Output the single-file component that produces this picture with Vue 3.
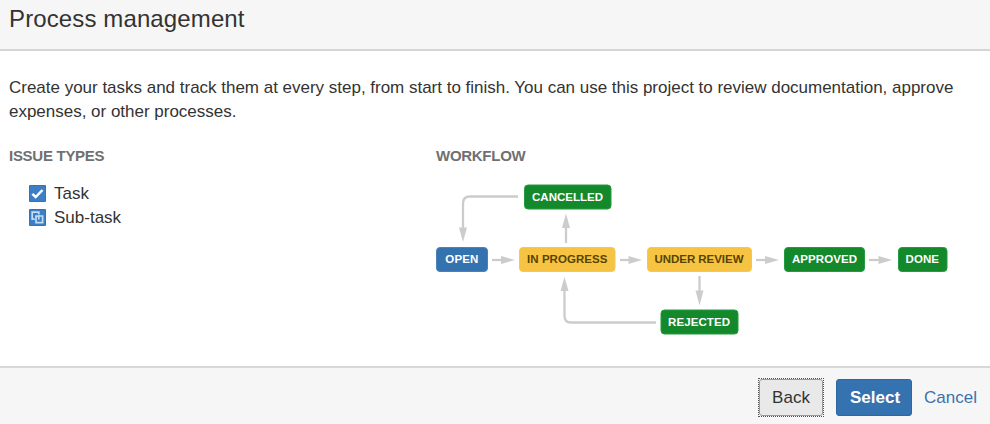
<script setup>
const issueTypes = [
  { name: 'Task', kind: 'task' },
  { name: 'Sub-task', kind: 'subtask' },
]

const nodes = [
  { label: 'CANCELLED', x: 88, y: 12.5, w: 87.5, tx: 96, tw: 71, tone: 'done' },
  { label: 'OPEN', x: 0, y: 75, w: 52, tx: 9.3, tw: 33, tone: 'open' },
  { label: 'IN PROGRESS', x: 83, y: 75, w: 96.5, tx: 91, tw: 80.5, tone: 'progress' },
  { label: 'UNDER REVIEW', x: 211, y: 75, w: 105, tx: 218.5, tw: 89, tone: 'progress' },
  { label: 'APPROVED', x: 348, y: 75, w: 81, tx: 356, tw: 65, tone: 'done' },
  { label: 'DONE', x: 462, y: 75, w: 49.5, tx: 469.5, tw: 33.5, tone: 'done' },
  { label: 'REJECTED', x: 224.5, y: 137.5, w: 78, tx: 232, tw: 62, tone: 'done' },
]

const lines = [
  'M82 24.5H34Q27 24.5 27 31.5V57',
  'M130 71V54',
  'M56 88H68',
  'M184 88H195',
  'M320 88H332',
  'M433 88H445',
  'M263.5 104V121',
  'M220 150.5H135Q128.5 150.5 128.5 144V118',
]

const heads = [
  '23,55.5 31,55.5 27,70',
  '126,56 134,56 130,41.5',
  '65,84 65,92 79,88',
  '192.5,84 192.5,92 206,88',
  '329,84 329,92 343,88',
  '442.5,84 442.5,92 456,88',
  '259.5,118.5 267.5,118.5 263.5,133.5',
  '124.5,119 132.5,119 128.5,105',
]
</script>

<template>
  <main class="dialog">
    <header class="header"><h1>Process management</h1></header>
    <div class="content">
      <p class="description">
        <span class="line-one">Create your tasks and track them at every step, from start to finish. You can use this project to review documentation, approve</span>
        <span class="line-two">expenses, or other processes.</span>
      </p>
      <div class="columns">
        <section class="types">
          <h2>ISSUE TYPES</h2>
          <ul>
            <li v-for="type in issueTypes" :key="type.kind">
              <svg class="icon" width="17" height="17" viewBox="0 0 17 17">
                <rect width="17" height="17" rx="1" fill="#3572b0" />
                <rect x="1" y="1" width="15" height="15" fill="#3b7fc4" />
                <path v-if="type.kind === 'task'" d="M3.3 8.8L6.7 12L13.5 5" fill="none" stroke="#fff" stroke-width="2.5" />
                <g v-else fill="none" stroke="#c3dcf5" stroke-width="1.7">
                  <path d="M5.7 10.2H3.2V3.2H9.8V5.6" />
                  <path d="M9.8 7H13.6V13.6H7V7.8" />
                  <path d="M6.2 7.2H9.8V10.4" />
                </g>
              </svg>
              <span>{{ type.name }}</span>
            </li>
          </ul>
        </section>
        <section class="workflow">
          <h2>WORKFLOW</h2>
          <svg class="diagram" width="530" height="170" viewBox="0 0 530 170">
            <path v-for="line in lines" :key="line" :d="line" class="edge" />
            <polygon v-for="head in heads" :key="head" :points="head" class="head" />
            <g v-for="node in nodes" :key="node.label" :class="node.tone">
              <rect :x="node.x + 0.5" :y="node.y + 0.5" :width="node.w - 1" height="24" rx="3.5" />
              <text :x="node.tx" :y="node.y + 16.4" :textLength="node.tw">{{ node.label }}</text>
            </g>
          </svg>
        </section>
      </div>
    </div>
    <footer class="footer">
      <div class="focus-ring"><button class="back" type="button">Back</button></div>
      <button class="select" type="button">Select</button>
      <a class="cancel">Cancel</a>
    </footer>
  </main>
</template>

<style>
body { margin: 0; }
</style>

<style scoped>
.dialog {
  box-sizing: border-box;
  width: 990px;
  height: 424px;
  display: flex;
  flex-direction: column;
  overflow: hidden;
  background: #fff;
  color: #333;
  font: 17px/24px "Liberation Sans", Arial, sans-serif;
}
.header {
  box-sizing: border-box;
  height: 51px;
  flex: none;
  padding: 4px 9px 0;
  background: #f6f6f6;
  border-bottom: 2px solid #d5d5d5;
}
h1 {
  margin: 0;
  font-size: 24px;
  line-height: 30px;
  font-weight: 400;
  letter-spacing: 0.12px;
}
.content {
  flex: 1;
  padding: 25px 9px 0;
}
.description { margin: 0; white-space: nowrap; letter-spacing: -0.012px; }
.description span { display: block; }
.columns { display: flex; padding-top: 22px; }
.types { width: 427px; flex: none; }
h2 {
  margin: 0;
  font-size: 15px;
  line-height: 20px;
  font-weight: 700;
  letter-spacing: -0.28px;
  color: #707070;
}
ul { list-style: none; margin: 0; padding: 16px 0 0 20px; }
li { display: flex; align-items: center; gap: 8px; height: 24px; }
.icon { flex: none; margin-bottom: 2px; }
.diagram { display: block; margin-top: 6px; }
.edge { fill: none; stroke: #ccc; stroke-width: 2.3; }
.head { fill: #ccc; }
.diagram text { font-size: 11.5px; font-weight: 700; fill: #fff; }
.done rect { fill: #14892c; stroke: #259a40; }
.open rect { fill: #3572b0; stroke: #4a82ba; }
.progress rect { fill: #f6c342; stroke: #f3c75c; }
.diagram .progress text { fill: #594300; }
.footer {
  box-sizing: border-box;
  height: 58px;
  flex: none;
  display: flex;
  align-items: flex-start;
  padding: 10px 0 0 758px;
  background: #f6f6f6;
  border-top: 2px solid #d8d8d8;
}
button {
  box-sizing: border-box;
  margin: 0;
  padding: 0;
  border-radius: 3px;
  font: inherit;
}
.focus-ring { border: 1px dotted #555; }
.back {
  display: block;
  width: 64px;
  height: 37px;
  color: #333;
  background: #e9e9e9;
  border: 1px solid #999;
}
.select {
  width: 76px;
  height: 37px;
  margin: 1px 0 0 12px;
  padding-left: 2px;
  color: #fff;
  font-weight: 700;
  background: #3572b0;
  border: 1px solid #2d689f;
}
.cancel { margin: 8px 0 0 12px; color: #3b73af; }
</style>
